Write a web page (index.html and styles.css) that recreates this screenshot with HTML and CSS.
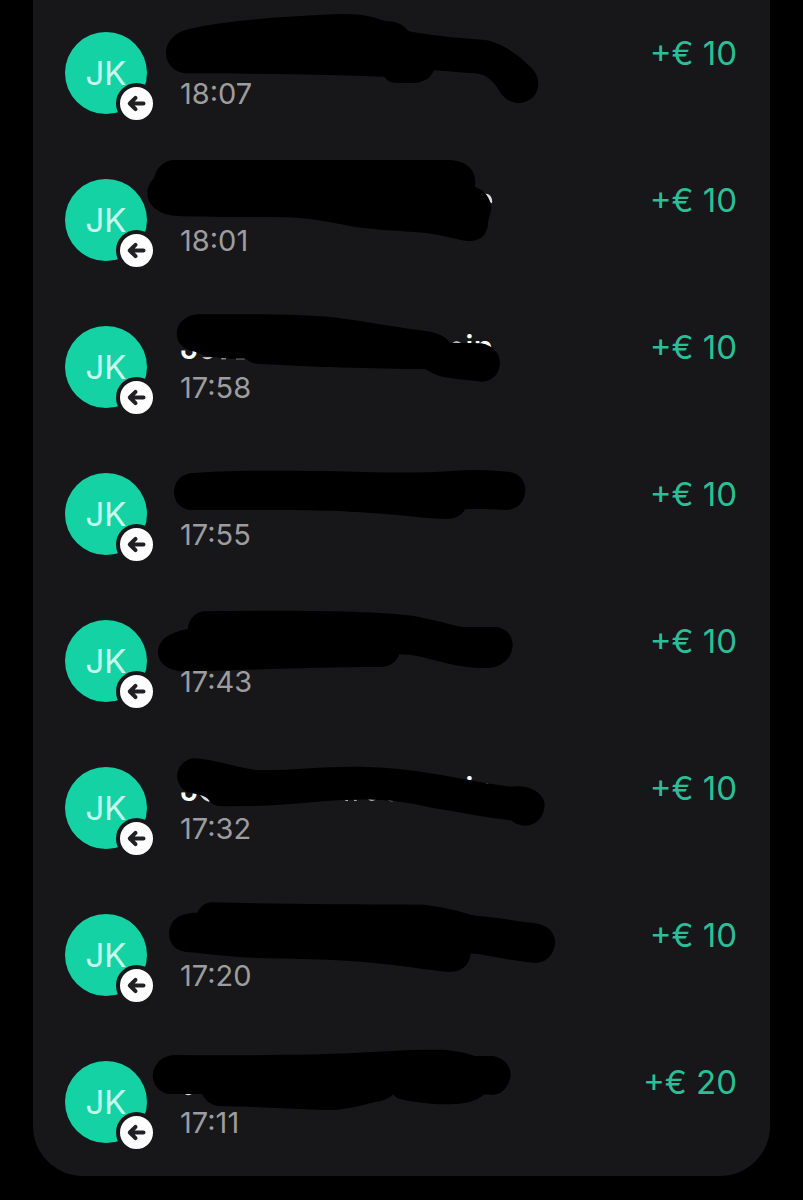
FILE: index.html
```html
<!DOCTYPE html>
<html lang="en">
<head>
  <meta charset="UTF-8" />
  <meta name="viewport" content="width=device-width, initial-scale=1.0"/>
  <title>Transactions</title>
  <link rel="stylesheet" href="styles.css">
</head>
<body>

  <!-- Shared arrow icon -->
  <svg class="sprite" aria-hidden="true">
    <symbol id="arrow" viewBox="0 0 33 33">
      <path d="M23.5 16.5H10M15.5 10.8L9.8 16.5L15.5 22.2" fill="none" stroke="currentColor" stroke-width="4" stroke-linecap="round" stroke-linejoin="round"/>
    </symbol>
  </svg>

  <main>
    <ul class="transactions">
      <li class="transaction">
        <div class="avatar">JK<span class="badge"><svg><use href="#arrow"/></svg></span></div>
        <div class="details">
          <svg class="marker" viewBox="0 0 1260 441" aria-hidden="true">
            <path d="M135 220C100 215 78 190 78 158C78 125 105 95 150 86C260 62 420 50 580 43C660 38 700 50 735 63C770 62 790 75 805 93C860 105 960 115 1030 119C1080 125 1130 160 1165 195C1190 215 1198 240 1194 262C1188 295 1160 309 1138 309C1115 309 1095 298 1082 278C1065 252 1045 222 1005 220C960 218 920 214 882 211C870 240 845 248 820 249L770 249C750 248 740 240 733 230C560 224 300 220 135 220Z"/>
          </svg>
          <time>18:07</time>
        </div>
        <span class="amount">+€ 10</span>
      </li>

      <li class="transaction">
        <div class="avatar">JK<span class="badge"><svg><use href="#arrow"/></svg></span></div>
        <div class="details">
          <svg class="marker" viewBox="0 -9 1260 441" aria-hidden="true">
            <path class="speck" d="M1036 131C1050 130 1059 145 1056 160L1036 150Z"/>
            <path d="M100 30L930 30C980 33 1012 60 1005 110C1032 120 1053 143 1054 175C1052 195 1044 205 1044 225C1038 265 1010 274 985 273C950 270 900 252 850 248C780 243 700 238 640 230C560 215 520 205 440 202C320 200 200 202 100 197C55 192 22 165 22 130C22 110 32 95 42 85C48 55 70 32 100 30Z"/>
          </svg>
          <time>18:01</time>
        </div>
        <span class="amount">+€ 10</span>
      </li>

      <li class="transaction">
        <div class="avatar">JK<span class="badge"><svg><use href="#arrow"/></svg></span></div>
        <div class="details">
          <svg class="marker" viewBox="0 -18 1260 441" aria-hidden="true">
            <text x="120" y="178">J</text>
            <text x="1060" y="178" text-anchor="end">in</text>
            <path class="speck" d="M936 130Q950 118 964 130ZM186 172Q202 184 218 172ZM244 175h14v3h-14ZM288 174h26v4h-26Z"/>
            <path d="M175 43C300 42 480 42 580 52C680 65 780 84 870 95C900 100 918 112 930 128L1025 130C1060 138 1080 160 1080 190C1078 225 1055 245 1025 245C985 240 940 237 910 231C885 225 870 215 855 207C700 206 500 200 350 191C335 189 325 183 318 176C260 177 200 173 165 155C130 150 110 130 110 100C112 65 140 45 175 43Z"/>
          </svg>
          <time>17:58</time>
        </div>
        <span class="amount">+€ 10</span>
      </li>

      <li class="transaction">
        <div class="avatar">JK<span class="badge"><svg><use href="#arrow"/></svg></span></div>
        <div class="details">
          <svg class="marker" viewBox="0 -42 1260 441" aria-hidden="true">
            <path d="M150 55C250 45 380 47 560 48C700 52 820 56 935 48C1000 42 1060 46 1110 51C1140 56 1157 80 1156 108C1153 145 1130 163 1100 165C1060 163 1010 161 975 163C965 182 945 192 920 192C830 188 750 176 680 173C560 164 400 165 150 165C120 162 102 140 102 108C104 80 122 60 150 55Z"/>
          </svg>
          <time>17:55</time>
        </div>
        <span class="amount">+€ 10</span>
      </li>

      <li class="transaction">
        <div class="avatar">JK<span class="badge"><svg><use href="#arrow"/></svg></span></div>
        <div class="details">
          <svg class="marker" viewBox="0 -36 1260 441" aria-hidden="true">
            <path d="M190 34C350 31 500 32 640 35C720 38 780 42 820 48C880 58 920 72 965 81L1070 81C1100 86 1119 108 1118 138C1115 175 1085 203 1040 204C1000 205 960 200 920 190C870 178 820 162 778 163C770 185 750 200 725 201C600 200 400 207 225 212L130 214C85 212 54 190 54 155C56 120 85 98 143 87C145 60 165 38 190 34Z"/>
          </svg>
          <time>17:43</time>
        </div>
        <span class="amount">+€ 10</span>
      </li>

      <li class="transaction">
        <div class="avatar">JK<span class="badge"><svg><use href="#arrow"/></svg></span></div>
        <div class="details">
          <svg class="marker" viewBox="0 -45 1260 441" aria-hidden="true">
            <text x="120" y="152">J</text>
            <text x="1060" y="152" text-anchor="end">in</text>
            <path class="speck" d="M180 134Q190 150 206 155L215 150L200 130ZM684 148Q695 157 708 148ZM744 150Q752 156 762 152ZM616 149h8v3h-8ZM642 149h8v3h-8Z"/>
            <path d="M165 25C220 28 280 50 350 60C450 62 530 50 640 50C750 50 820 62 900 74C980 88 1050 103 1115 110C1170 103 1213 130 1214 165C1212 205 1185 227 1155 227C1135 226 1125 220 1112 211C1040 203 950 185 880 174C820 160 760 150 700 149C640 148 570 152 500 158C410 165 320 171 235 168C222 166 214 160 208 152C198 136 165 131 150 129C125 122 111 100 111 75C115 42 140 25 165 25Z"/>
          </svg>
          <time>17:32</time>
        </div>
        <span class="amount">+€ 10</span>
      </li>

      <li class="transaction">
        <div class="avatar">JK<span class="badge"><svg><use href="#arrow"/></svg></span></div>
        <div class="details">
          <svg class="marker" viewBox="0 -24 1260 441" aria-hidden="true">
            <path d="M215 37C400 42 600 43 850 44C910 50 960 65 1010 78C1070 80 1130 95 1195 101C1230 108 1246 135 1246 160C1240 200 1215 219 1185 219C1110 213 1050 195 992 190C990 225 965 246 930 246C860 240 780 226 700 219C560 205 420 207 310 202C250 198 190 190 140 186C105 182 87 160 87 128C90 95 110 68 172 68C180 50 195 38 215 37Z"/>
          </svg>
          <time>17:20</time>
        </div>
        <span class="amount">+€ 10</span>
      </li>

      <li class="transaction">
        <div class="avatar">JK<span class="badge"><svg><use href="#arrow"/></svg></span></div>
        <div class="details">
          <svg class="marker" viewBox="0 -18 1260 441" aria-hidden="true">
            <path class="speck" d="M132 175Q145 187 158 175Z"/>
            <path d="M100 60C300 62 500 60 640 54C720 50 800 43 910 44C950 48 980 54 1005 63L1060 63C1095 70 1112 95 1112 120C1108 155 1085 180 1055 180C1040 178 1035 178 1030 180C1010 200 970 207 930 208C870 208 800 200 770 188L759 178C745 195 720 200 695 203C640 218 600 226 550 225C440 222 330 214 235 213C210 210 195 195 186 177L85 177C55 170 38 148 38 120C42 85 65 64 100 60Z"/>
          </svg>
          <time>17:11</time>
        </div>
        <span class="amount">+€ 20</span>
      </li>
    </ul>
  </main>

</body>
</html>
```
FILE: styles.css
```css
body {
  margin: 0;
  background: #000;
  font-family: Inter, "Liberation Sans", sans-serif;
}

.sprite {
  display: none;
}

main {
  padding: 0 33px 24px;
}

.transactions {
  list-style: none;
  margin: 0;
  padding: 0;
  background: #171719;
  border-radius: 0 0 50px 50px;
}

.transaction {
  position: relative;
  display: flex;
  align-items: flex-start;
  gap: 33px;
  min-height: 147px;
  padding: 32px 33px 0 32px;
  box-sizing: border-box;
}

/* Initials and incoming badge */
.avatar {
  position: relative;
  flex: none;
  width: 82px;
  height: 82px;
  border-radius: 50%;
  background: #15d2a5;
  color: #c4fbec;
  font-size: 33px;
  line-height: 83px;
  text-align: center;
}

.badge {
  position: absolute;
  right: -10px;
  bottom: -10px;
  width: 33px;
  height: 33px;
  border: 4px solid #171719;
  border-radius: 50%;
  background: #fff;
  color: #202022;
}

.badge svg {
  display: block;
  width: 33px;
  height: 33px;
}

.details {
  flex: 1;
  padding-top: 44px;
}

.details time {
  position: relative;
  display: block;
  color: #9d9d9f;
  font-size: 29px;
  line-height: 36px;
}

/* Marker strokes lie over the name */
.marker {
  position: absolute;
  left: 107px;
  top: 0;
  width: 420px;
  height: 147px;
  overflow: visible;
}

.marker text {
  fill: #fff;
  font-size: 99px;
  font-weight: 500;
}

.marker .speck {
  fill: #ddd;
}

.amount {
  color: #2abf97;
  font-size: 33px;
  line-height: 42px;
  white-space: nowrap;
}
```
